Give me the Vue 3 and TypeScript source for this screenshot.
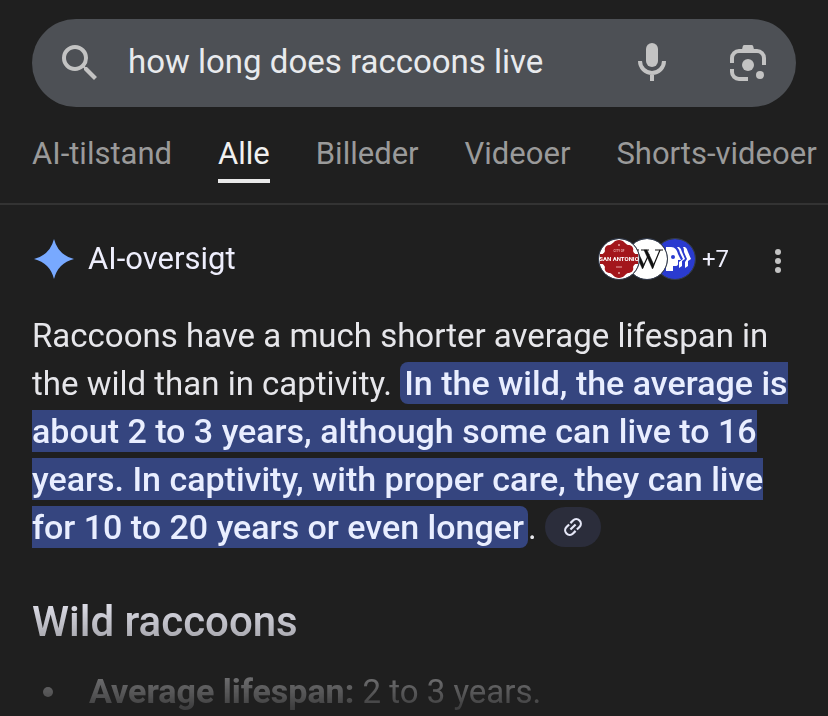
<script setup lang="ts">
import { ref } from 'vue'

interface Tab {
  id: string
  label: string
}

const tabs: Tab[] = [
  { id: 'ai', label: 'AI-tilstand' },
  { id: 'all', label: 'Alle' },
  { id: 'images', label: 'Billeder' },
  { id: 'videos', label: 'Videoer' },
  { id: 'shorts', label: 'Shorts-videoer' },
]

const activeTab = ref('all')
const query = ref('how long does raccoons live')
</script>

<template>
  <div class="page">
    <header class="header">
      <form class="search" role="search" @submit.prevent>
        <button class="icon-button" type="submit" aria-label="Søg">
          <svg class="icon" viewBox="0 0 24 24">
            <path
              fill="currentColor"
              d="M15.5 14h-.79l-.28-.27A6.47 6.47 0 0 0 16 9.5 6.5 6.5 0 1 0 9.5 16c1.61 0 3.09-.59 4.23-1.57l.27.28v.79l5 4.99L20.49 19l-4.99-5zm-6 0C7.01 14 5 11.99 5 9.5S7.01 5 9.5 5 14 7.01 14 9.5 11.99 14 9.5 14z"
            />
          </svg>
        </button>
        <input v-model="query" class="search-input" type="text" aria-label="Søgning" />
        <button class="icon-button" type="button" aria-label="Talesøgning">
          <svg class="icon" viewBox="0 0 24 24">
            <rect x="9" y="2" width="6" height="12" rx="3" fill="currentColor" />
            <path d="M6 11a6 6 0 0 0 12 0M12 17v4" fill="none" stroke="currentColor" stroke-width="2" />
          </svg>
        </button>
        <button class="icon-button lens" type="button" aria-label="Billedsøgning">
          <svg class="icon" viewBox="0 0 24 24">
            <path
              d="M4 12V9.500A3.500 3.500 0 0 1 7.500 6h9A3.500 3.500 0 0 1 20 9.500V13M4 15v1.500A3.500 3.500 0 0 0 7.500 20H12"
              fill="none"
              stroke="currentColor"
              stroke-width="2"
            />
            <path d="M10.200 3h3.600q.6 0 .8.600L15.200 6H8.800l.6-2.400q.2-.6.8-.6z" fill="currentColor" />
            <circle cx="12" cy="13" r="3" fill="currentColor" />
            <circle cx="18" cy="18" r="2" fill="currentColor" />
          </svg>
        </button>
      </form>
    </header>

    <nav class="tabs" aria-label="Søgetilstande">
      <a
        v-for="tab in tabs"
        :key="tab.id"
        href="#"
        class="tab"
        :class="{ active: tab.id === activeTab }"
        @click.prevent="activeTab = tab.id"
        >{{ tab.label }}</a
      >
    </nav>

    <main class="overview">
      <div class="overview-head">
        <svg class="spark" viewBox="0 0 40 40">
          <path d="M20 0Q24 16 40 20Q24 24 20 40Q16 24 0 20Q16 16 20 0Z" fill="#78a9ff" />
        </svg>
        <h1 class="title">AI-oversigt</h1>
        <button class="sources" type="button">
          <svg class="logo" viewBox="0 0 40 40">
            <circle cx="20" cy="20" r="20" fill="#fff" />
            <path
              d="M20 1C25 1 26 5 29 6C33 6 35 9 34 12C35 15 39 16 39 20C39 24 35 25 34 28C35 31 33 34 29 34C26 35 25 39 20 39C15 39 14 35 11 34C7 34 5 31 6 28C5 25 1 24 1 20C1 16 5 15 6 12C5 9 7 6 11 6C14 5 15 1 20 1Z"
              fill="#a3161c"
            />
            <rect x="1" y="15" width="38" height="10" fill="#a3161c" />
            <circle cx="20" cy="6" r="1" fill="#e7a5a5" />
            <circle cx="20" cy="34" r="1" fill="#e7a5a5" />
            <text x="20" y="13" class="logo-small">CITY OF</text>
            <text x="20" y="22" class="logo-name">SAN ANTONIO</text>
            <path d="M17 28h6" stroke="#e7a5a5" stroke-width="1" />
          </svg>
          <svg class="logo" viewBox="0 0 40 40">
            <circle cx="20" cy="20" r="20" fill="#fff" />
            <path d="M4 11h8M14 11h8M28 11h8" stroke="#111" stroke-width="1" fill="none" />
            <path d="M7 11h3l7 15-1.500 4zM17 11h3l7 15-1.500 4z" fill="#111" stroke="#111" stroke-width="0.5" />
            <path d="M15.500 29L22 15M25.500 29L33 11" stroke="#111" stroke-width="1.200" fill="none" />
          </svg>
          <svg class="logo" viewBox="0 0 40 40">
            <circle cx="20" cy="20" r="20" fill="#2a3bd0" />
            <path d="M11 8h5c4 0 6 3 7 7l3 6h-3v4q0 2-3 2h-2v5h-7z" fill="#fff" />
            <circle cx="18" cy="18" r="2" fill="#2a3bd0" />
            <path d="M22 8h2q2 1 3 5l3 7-3 2v5l-3 2v-6l4-3-3-6q-1-4-3-6z" fill="#fff" />
            <path d="M28 8h2q2 1 3 5l3 7-3 2v5l-3 2v-6l2-3-3-7q0-4-1-5z" fill="#fff" />
          </svg>
          <span class="more">+7</span>
        </button>
        <button class="menu" type="button" aria-label="Flere valgmuligheder">
          <svg class="dots" viewBox="0 0 8 24">
            <circle cx="4" cy="3" r="3" />
            <circle cx="4" cy="12" r="3" />
            <circle cx="4" cy="21" r="3" />
          </svg>
        </button>
      </div>

      <p class="answer">
        Raccoons have a much shorter average lifespan in the wild than in captivity.
        <mark class="highlight"
          >In the wild, the average is about 2 to 3 years, although some can live to 16 years. In
          captivity, with proper care, they can live for 10 to 20 years or even longer</mark
        >.
        <button class="chip" type="button" aria-label="Vis kilder">
          <svg class="link-icon" viewBox="0 0 24 24">
            <g
              transform="rotate(-45 12 12)"
              fill="none"
              stroke="currentColor"
              stroke-width="2.400"
            >
              <path d="M11 7H7a5 5 0 0 0 0 10h4M13 7h4a5 5 0 0 1 0 10h-4M8 12h8" />
            </g>
          </svg>
        </button>
      </p>

      <h2 class="subtitle">Wild raccoons</h2>
      <ul class="facts">
        <li class="fact">
          <span><strong>Average lifespan:</strong> 2 to 3 years.</span>
        </li>
      </ul>
    </main>
  </div>
</template>

<style>
body {
  margin: 0;
  background: #1f1f1f;
}
</style>

<style scoped>
.page {
  background: #1f1f1f;
  color: #e6e6ea;
  font-family: Roboto, 'Liberation Sans', sans-serif;
  overflow: hidden;
}

button {
  border: 0;
  padding: 0;
  background: none;
  color: inherit;
  font: inherit;
  cursor: pointer;
}

svg {
  display: block;
}

.header {
  padding: 19px 32px 0;
}

.search {
  display: flex;
  align-items: center;
  height: 88px;
  padding: 0 24px;
  border-radius: 44px;
  background: #4d5055;
}

.icon-button {
  flex: none;
  color: #c3c3c3;
}

.icon {
  width: 48px;
  height: 48px;
}

.search-input {
  flex: 1;
  min-width: 0;
  margin-left: 24px;
  padding: 0 0 4px;
  border: 0;
  outline: 0;
  background: none;
  color: #e8eaed;
  font: 400 33px Roboto, 'Liberation Sans', sans-serif;
}

.lens {
  margin-left: 48px;
}

.tabs {
  display: flex;
  gap: 46px;
  padding: 0 32px 20px;
  border-bottom: 2px solid #333;
  overflow: hidden;
}

.tab {
  flex: none;
  padding: 31px 0 9px;
  border-bottom: 4px solid transparent;
  color: #9a9a9a;
  font-size: 31px;
  line-height: 32px;
  text-decoration: none;
  white-space: nowrap;
}

.tab.active {
  border-color: #e8e8e8;
  color: #f1f1f1;
}

.overview {
  padding: 30px 32px 0;
  -webkit-mask-image: linear-gradient(to bottom, #000 calc(100% - 118px), rgba(0, 0, 0, 0.1));
  mask-image: linear-gradient(to bottom, #000 calc(100% - 118px), rgba(0, 0, 0, 0.1));
}

.overview-head {
  display: flex;
  align-items: center;
  height: 48px;
}

.spark {
  width: 40px;
  height: 40px;
  margin: 0 14px 0 2px;
}

.title {
  flex: 1;
  margin: 0;
  padding-bottom: 2px;
  color: #eeeefc;
  font-size: 31px;
  font-weight: 400;
}

.sources {
  display: flex;
  align-items: center;
}

.logo {
  position: relative;
  box-sizing: border-box;
  width: 42px;
  height: 42px;
  border: 1px solid #343c4c;
  border-radius: 50%;
  background: #343c4c;
}

.logo + .logo {
  margin-left: -14px;
}

.logo:nth-child(1) {
  z-index: 3;
}

.logo:nth-child(2) {
  z-index: 2;
}

.logo-name,
.logo-small {
  fill: #fff;
  font-family: Roboto, sans-serif;
  font-weight: 700;
  text-anchor: middle;
}

.logo-name {
  font-size: 6px;
}

.logo-small {
  fill: #e7a5a5;
  font-size: 3px;
}

.more {
  margin-left: 6px;
  color: #eeeefc;
  font-size: 24px;
}

.menu {
  display: flex;
  justify-content: center;
  width: 36px;
  margin-left: 31px;
  padding-top: 4px;
}

.dots {
  width: 8px;
  height: 24px;
  fill: #c3c3c3;
}

.answer {
  margin: 29px 0 0;
  font-size: 33px;
  line-height: 48px;
}

.highlight {
  padding: 1px 4px;
  border-radius: 8px;
  background: #35457f;
  color: #e9eeff;
  font-size: 34px;
  font-weight: 500;
  line-height: 44px;
}

.chip {
  display: inline-flex;
  align-items: center;
  justify-content: center;
  width: 56px;
  height: 40px;
  border-radius: 20px;
  background: #2b2d3b;
  color: #e6e8f8;
  vertical-align: 1px;
}

.link-icon {
  width: 22px;
  height: 22px;
}

.subtitle {
  margin: 46px 0 0;
  color: #e6e6f0;
  font-size: 42px;
  font-weight: 500;
  line-height: 48px;
}

.facts {
  margin: 22px 0 0;
  padding: 0 0 0 11px;
  font-size: 33px;
  line-height: 48px;
  list-style: none;
}

.fact {
  display: flex;
  align-items: center;
  gap: 36px;
}

.fact::before {
  content: '';
  width: 10px;
  height: 10px;
  border-radius: 50%;
  background: currentColor;
}

.fact strong {
  font-size: 34px;
  line-height: 44px;
}
</style>
